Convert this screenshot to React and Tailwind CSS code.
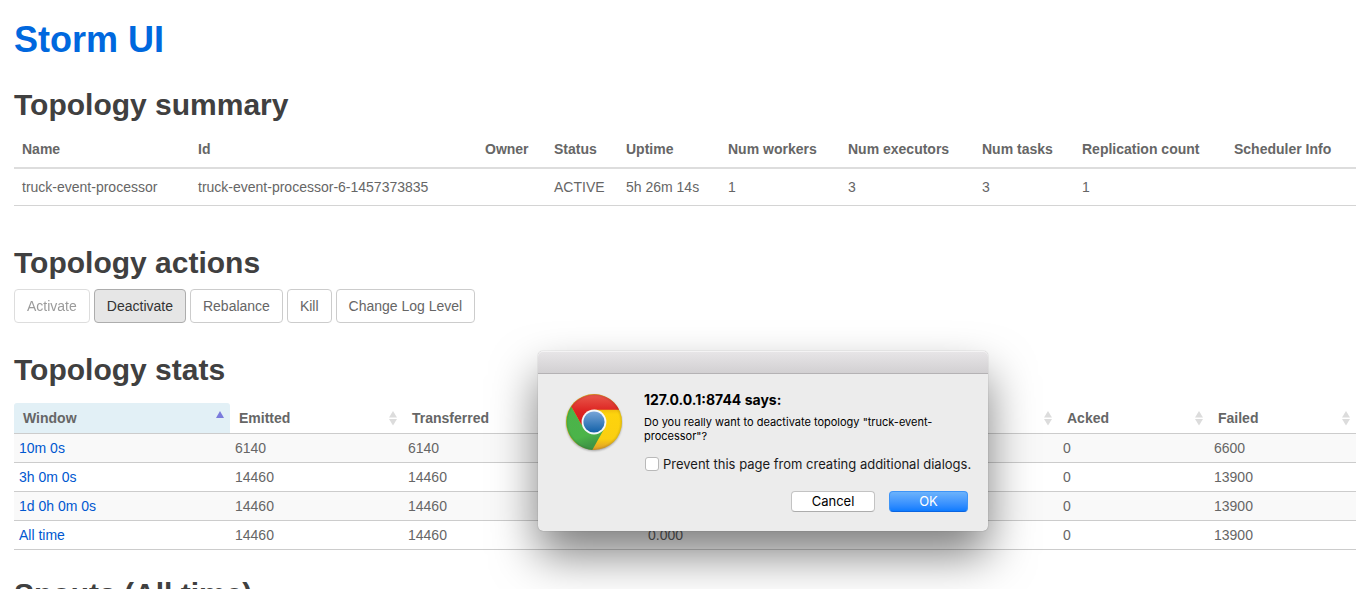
import React from 'react';

const summaryColumns = [
  { title: 'Name', width: 'w-[176px]', value: 'truck-event-processor' },
  { title: 'Id', width: 'w-[287px]', value: 'truck-event-processor-6-1457373835' },
  { title: 'Owner', width: 'w-[69px]', value: '' },
  { title: 'Status', width: 'w-[72px]', value: 'ACTIVE' },
  { title: 'Uptime', width: 'w-[102px]', value: '5h 26m 14s' },
  { title: 'Num workers', width: 'w-[120px]', value: '1' },
  { title: 'Num executors', width: 'w-[134px]', value: '3' },
  { title: 'Num tasks', width: 'w-[100px]', value: '3' },
  { title: 'Replication count', width: 'w-[152px]', value: '1' },
  { title: 'Scheduler Info', width: 'w-[130px]', value: '' },
];

const statsColumns = [
  { title: 'Window', width: 'w-[216px]', sorted: true },
  { title: 'Emitted', width: 'w-[173px]' },
  { title: 'Transferred', width: 'w-[240px]' },
  { title: '', width: 'w-[415px]' },
  { title: 'Acked', width: 'w-[151px]' },
  { title: 'Failed', width: 'w-[147px]' },
];

const statsRows = [
  ['10m 0s', '6140', '6140', '', '0', '6600'],
  ['3h 0m 0s', '14460', '14460', '', '0', '13900'],
  ['1d 0h 0m 0s', '14460', '14460', '', '0', '13900'],
  ['All time', '14460', '14460', '0.000', '0', '13900'],
];

const actions = [
  { label: 'Activate', disabled: true },
  { label: 'Deactivate', active: true },
  { label: 'Rebalance' },
  { label: 'Kill' },
  { label: 'Change Log Level' },
];

function Heading({ children, className }) {
  return (
    <h2 className={`text-[30px] leading-[33px] font-bold text-[#404040] ${className}`}>
      {children}
    </h2>
  );
}

function SortIcon({ sorted }) {
  return (
    <svg width="8" height="16" viewBox="0 0 8 16" aria-hidden="true">
      {sorted ? (
        <path d="M4 1 L8 8 H0 Z" fill="#7b7bdc" />
      ) : (
        <>
          <path d="M4 1 L8 7.5 H0 Z" fill="#dcdcdc" />
          <path d="M0 9 H8 L4 15.5 Z" fill="#dcdcdc" />
        </>
      )}
    </svg>
  );
}

function SummaryTable() {
  return (
    <table className="mt-[10px] w-full table-fixed border-separate border-spacing-0 text-left leading-5">
      <thead>
        <tr>
          {summaryColumns.map((c) => (
            <th
              key={c.title}
              className={`${c.width} border-b-2 border-[#dddddd] p-2 font-bold whitespace-nowrap`}
            >
              {c.title}
            </th>
          ))}
        </tr>
      </thead>
      <tbody>
        <tr>
          {summaryColumns.map((c) => (
            <td key={c.title} className="border-b border-[#d4d4d4] p-2 whitespace-nowrap">
              {c.value}
            </td>
          ))}
        </tr>
      </tbody>
    </table>
  );
}

function StatsTable() {
  return (
    <table className="mt-[17px] w-full table-fixed border-separate border-spacing-0 text-left leading-5">
      <thead>
        <tr>
          {statsColumns.map((c, i) => (
            <th
              key={i}
              className={`${c.width} border-b border-[#cccccc] py-[5px] pr-[6px] pl-[9px] font-bold ${
                c.sorted ? 'rounded-t-[3px] bg-[#e2f0f6]' : ''
              }`}
            >
              <div className="flex items-center justify-between whitespace-nowrap">
                <span>{c.title}</span>
                <SortIcon sorted={c.sorted} />
              </div>
            </th>
          ))}
        </tr>
      </thead>
      <tbody>
        {statsRows.map((row) => (
          <tr key={row[0]} className="odd:bg-[#f9f9f9]">
            {row.map((value, i) => (
              <td key={i} className="border-b border-[#cccccc] px-[5px] py-1">
                {i === 0 ? (
                  <a href="#window" className="text-[#0058d0]">
                    {value}
                  </a>
                ) : (
                  value
                )}
              </td>
            ))}
          </tr>
        ))}
      </tbody>
    </table>
  );
}

function ChromeIcon() {
  return (
    <svg width="58" height="60" viewBox="-1 -1 58 60" className="block shrink-0" aria-hidden="true">
      <defs>
        <linearGradient id="red" x1="0" y1="0" x2="0" y2="1">
          <stop offset="0" stopColor="#e9594c" />
          <stop offset="0.55" stopColor="#dd2422" />
          <stop offset="1" stopColor="#d2191c" />
        </linearGradient>
        <linearGradient id="green" x1="0" y1="0" x2="0.3" y2="1">
          <stop offset="0" stopColor="#4cb34a" />
          <stop offset="0.75" stopColor="#4bb449" />
          <stop offset="1" stopColor="#3f9645" />
        </linearGradient>
        <linearGradient id="yellow" x1="0" y1="0" x2="0" y2="1">
          <stop offset="0.26" stopColor="#edb90f" />
          <stop offset="0.36" stopColor="#fdd30d" />
          <stop offset="0.8" stopColor="#fbcf10" />
          <stop offset="1" stopColor="#dc9a2c" />
        </linearGradient>
        <linearGradient id="blue" x1="0" y1="0" x2="0" y2="1">
          <stop offset="0" stopColor="#78a5d8" />
          <stop offset="1" stopColor="#1261a8" />
        </linearGradient>
        <radialGradient id="rim">
          <stop offset="0.9" stopColor="#000" stopOpacity="0" />
          <stop offset="1" stopColor="#000" stopOpacity="0.12" />
        </radialGradient>
        <filter id="soft" x="-10%" y="-10%" width="120%" height="120%">
          <feGaussianBlur stdDeviation="0.8" />
        </filter>
      </defs>
      <circle cx="28" cy="29" r="27.8" fill="#000" opacity="0.35" filter="url(#soft)" />
      <circle cx="28" cy="28" r="28" fill="url(#yellow)" />
      <path d="M5.3 12.4 L15.4 30.5 L28 28 L37.5 36 L26.3 56 A28 28 0 0 1 5.3 12.4 Z" fill="url(#green)" />
      <path d="M5.3 12.4 A28 28 0 0 1 53.1 15.7 H28 V28 L15.4 30.5 Z" fill="url(#red)" />
      <circle cx="28" cy="28" r="28" fill="url(#rim)" />
      <circle cx="28" cy="28" r="12.4" fill="#f6f8fa" />
      <circle cx="28" cy="28" r="10.6" fill="url(#blue)" />
    </svg>
  );
}

function ConfirmDialog() {
  return (
    <div
      role="dialog"
      aria-labelledby="dialog-title"
      className="absolute top-[351px] left-[538px] w-[450px] rounded-[5px] bg-[#ececec] font-['Inter',sans-serif] text-black shadow-[0_0_1px_rgba(0,0,0,0.45),0_24px_46px_rgba(0,0,0,0.5)]"
    >
      <div className="h-[23px] rounded-t-[5px] border-b border-[#b4b2b4] bg-linear-to-b from-[#e8e6e8] to-[#d2d0d2] shadow-[inset_0_1px_0_#f4f3f4]" />
      <div className="flex gap-[21px] pt-[19px] pr-5 pb-[19px] pl-[27px]">
        <ChromeIcon />
        <div className="min-w-0 flex-1">
          <h3 id="dialog-title" className="text-[14px] leading-[14px] font-bold">
            127.0.0.1:8744 says:
          </h3>
          <p className="mt-2 text-[11px] leading-[14px]">
            Do you really want to deactivate topology "truck-event-
            <br />
            processor"?
          </p>
          <label className="mt-[13px] flex items-center gap-1 text-[13px] leading-4 whitespace-nowrap text-[#1a1a1a]">
            <input
              type="checkbox"
              className="ml-px size-[14px] shrink-0 appearance-none rounded-[3px] border border-[#b9b9b9] bg-white"
            />
            Prevent this page from creating additional dialogs.
          </label>
          <div className="mt-[19px] flex justify-end gap-[14px] text-[13px] leading-[19px]">
            <button
              type="button"
              className="h-[21px] w-[84px] rounded-[4px] border border-[#c3c3c3] border-b-[#acacac] bg-white"
            >
              Cancel
            </button>
            <button
              type="button"
              className="h-[21px] w-[79px] rounded-[4px] border border-[#3d94f7] border-b-[#0a64e0] bg-linear-to-b from-[#6bb2fb] to-[#0a7bff] text-white"
            >
              OK
            </button>
          </div>
        </div>
      </div>
    </div>
  );
}

export default function App() {
  return (
    <div className="relative h-screen overflow-hidden bg-white font-['Liberation_Sans',Arial,sans-serif] text-[14px] leading-5 text-[#666666]">
      <main className="pt-5 pr-[2px] pl-[14px]">
        <h1 className="text-[36px] leading-[40px] font-bold">
          <a href="#home" className="text-[#0068de]">
            Storm UI
          </a>
        </h1>
        <Heading className="mt-7">Topology summary</Heading>
        <SummaryTable />
        <Heading className="mt-10">Topology actions</Heading>
        <div className="mt-[10px] flex gap-1">
          {actions.map((a) => (
            <button
              key={a.label}
              type="button"
              disabled={a.disabled}
              className={`rounded-[4px] border px-3 py-[6px] ${
                a.active
                  ? 'border-[#adadad] bg-[#e6e6e6] text-[#333333]'
                  : 'border-[#cccccc] bg-white disabled:opacity-65'
              }`}
            >
              {a.label}
            </button>
          ))}
        </div>
        <Heading className="mt-[30px]">Topology stats</Heading>
        <StatsTable />
        <Heading className="mt-[27px]">Spouts (All time)</Heading>
      </main>
      <ConfirmDialog />
    </div>
  );
}
